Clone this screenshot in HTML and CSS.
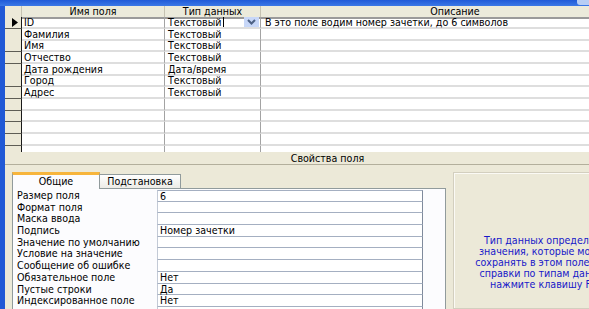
FILE: index.html
```html
<!DOCTYPE html>
<html lang="ru">
<head>
<meta charset="utf-8">
<title>Конструктор таблицы</title>
<link rel="stylesheet" href="styles.css">
</head>
<body>
<div class="titlebar"><span class="tb-btn"></span></div>
<div class="window">
  <div class="grid">
    <div class="row head">
      <div class="sel"></div>
      <div class="c c1">Имя поля</div>
      <div class="c c2">Тип данных</div>
      <div class="c c3">Описание</div>
    </div>
    <div class="row">
      <div class="sel"><svg class="arrow" width="6" height="9" viewBox="0 0 6 9"><path d="M0 0 L6 4.5 L0 9 Z" fill="#000"/></svg></div>
      <div class="c c1">ID</div>
      <div class="c c2 edit"><span>Текстовый<i class="caret"></i></span><span class="combo"><svg width="9" height="6" viewBox="0 0 9 6"><path d="M1 1 L4.5 4.5 L8 1" fill="none" stroke="#4d6185" stroke-width="2"/></svg></span></div>
      <div class="c c3">В это поле водим номер зачетки, до 6 символов</div>
    </div>
    <div class="row"><div class="sel"></div><div class="c c1">Фамилия</div><div class="c c2">Текстовый</div><div class="c c3"></div></div>
    <div class="row"><div class="sel"></div><div class="c c1">Имя</div><div class="c c2">Текстовый</div><div class="c c3"></div></div>
    <div class="row"><div class="sel"></div><div class="c c1">Отчество</div><div class="c c2">Текстовый</div><div class="c c3"></div></div>
    <div class="row"><div class="sel"></div><div class="c c1">Дата рождения</div><div class="c c2">Дата/время</div><div class="c c3"></div></div>
    <div class="row"><div class="sel"></div><div class="c c1">Город</div><div class="c c2">Текстовый</div><div class="c c3"></div></div>
    <div class="row"><div class="sel"></div><div class="c c1">Адрес</div><div class="c c2">Текстовый</div><div class="c c3"></div></div>
    <div class="row"><div class="sel"></div><div class="c c1"></div><div class="c c2"></div><div class="c c3"></div></div>
    <div class="row"><div class="sel"></div><div class="c c1"></div><div class="c c2"></div><div class="c c3"></div></div>
    <div class="row"><div class="sel"></div><div class="c c1"></div><div class="c c2"></div><div class="c c3"></div></div>
    <div class="row"><div class="sel"></div><div class="c c1"></div><div class="c c2"></div><div class="c c3"></div></div>
    <div class="row"><div class="sel"></div><div class="c c1"></div><div class="c c2"></div><div class="c c3"></div></div>
    <div class="row"><div class="sel"></div><div class="c c1"></div><div class="c c2"></div><div class="c c3"></div></div>
  </div>
  <div class="props-title">Свойства поля</div>
  <div class="lower">
    <div class="tabs">
      <div class="tabstrip">
        <div class="tab active">Общие</div>
        <div class="tab">Подстановка</div>
      </div>
      <div class="page">
        <div class="prop first"><div class="label">Размер поля</div><div class="val">6</div></div>
        <div class="prop"><div class="label">Формат поля</div><div class="val"></div></div>
        <div class="prop"><div class="label">Маска ввода</div><div class="val"></div></div>
        <div class="prop"><div class="label">Подпись</div><div class="val">Номер зачетки</div></div>
        <div class="prop"><div class="label">Значение по умолчанию</div><div class="val"></div></div>
        <div class="prop"><div class="label">Условие на значение</div><div class="val"></div></div>
        <div class="prop"><div class="label">Сообщение об ошибке</div><div class="val"></div></div>
        <div class="prop"><div class="label">Обязательное поле</div><div class="val">Нет</div></div>
        <div class="prop"><div class="label">Пустые строки</div><div class="val">Да</div></div>
        <div class="prop"><div class="label">Индексированное поле</div><div class="val">Нет</div></div>
        <div class="prop"><div class="label"></div><div class="val"></div></div>
      </div>
    </div>
    <div class="help">Тип данных определяет<br>значения, которые можно<br>сохранять в этом поле. Для<br>справки по типам данных<br>нажмите клавишу F1.</div>
  </div>
</div>
</body>
</html>
```
FILE: styles.css
```css
* { box-sizing: border-box; }
html, body {
  margin: 0;
  height: 309px;
  overflow: hidden;
}
body {
  width: 589px;
  background: #ECE9D8;
  font-family: "DejaVu Sans Condensed", "DejaVu Sans", sans-serif;
  font-stretch: condensed;
  font-size: 10.6px;
  color: #000;
}
.titlebar {
  position: relative;
  width: 650px;
  height: 6px;
  background: linear-gradient(#1f5ad8, #3a78e6);
}
.tb-btn {
  position: absolute;
  left: 577px;
  top: 0;
  width: 14px;
  height: 5px;
  background: #b7cdf4;
  border-radius: 0 0 0 3px;
}
.window {
  width: 650px;
  height: 303px;
  border-left: 5px solid #2159d6;
  display: flex;
  flex-direction: column;
}
.grid {
  flex: none;
  height: 146px;
  overflow: hidden;
  background: #fff;
  display: flex;
  flex-direction: column;
}
.row {
  flex: none;
  display: grid;
  grid-template-columns: 17px 143px 96px 1fr;
  height: 11.7px;
}
.row.head { height: 11px; }
.sel {
  background: #ECE9D8;
  border-right: 1px solid #1a1a1a;
  border-bottom: 1px solid #5e5d55;
  display: flex;
  align-items: center;
  justify-content: flex-end;
  padding-right: 3px;
}
.head .sel { border-bottom: 2px solid #9a9a9a; border-right: 1px solid #c5c2b2; }
.c {
  border-right: 1px solid #a3a3a3;
  border-bottom: 2px solid #dedede;
  padding-left: 2px;
  line-height: 10px;
  white-space: nowrap;
}
.c2 { padding-left: 3px; }
.c3 { padding-left: 4px; border-right: none; }
.head .c {
  background: #ebeadb;
  text-align: center;
  border-bottom: 2px solid #9a9a9a;
  border-right: 1px solid #c5c2b2;
  line-height: 11px;
  padding-left: 0;
}
.edit {
  display: flex;
  justify-content: space-between;
  padding-right: 1px;
}
.caret {
  display: inline-block;
  width: 1px;
  height: 10px;
  background: #000;
  vertical-align: top;
  margin-left: 2px;
}
.combo {
  width: 15px;
  height: 10px;
  background: #c7d7f8;
  display: flex;
  align-items: center;
  justify-content: center;
}
.props-title {
  flex: none;
  height: 13px;
  line-height: 12px;
  text-align: center;
  border-bottom: 1px solid #b3af9c;
  background: #ECE9D8;
}
.lower {
  flex: 1;
  display: flex;
  gap: 7px;
  padding: 7px 0 0 7px;
  min-height: 0;
}
.tabs {
  width: 434px;
  display: flex;
  flex-direction: column;
}
.tabstrip {
  height: 16px;
  display: flex;
  align-items: flex-end;
}
.tab {
  height: 14px;
  width: 81px;
  text-align: center;
  line-height: 13px;
  border: 1px solid #919b9c;
  border-left: none;
  border-bottom: none;
  background: linear-gradient(#ffffff, #ecebe6);
}
.tab.active {
  position: relative;
  z-index: 1;
  width: 88px;
  height: 17px;
  margin-bottom: -1px;
  border-left: 1px solid #919b9c;
  border-top: 3px solid #f7b53c;
  background: #fcfcfe;
  line-height: 12px;
}
.page {
  flex: 1;
  border: 1px solid #919b9c;
  background: #fcfcfe;
  padding-top: 1px;
}
.prop {
  display: grid;
  grid-template-columns: 144px 266px;
  height: 11.7px;
  line-height: 11px;
}
.label {
  padding-left: 4px;
  white-space: nowrap;
}
.val {
  background: #fff;
  border-left: 1px solid #c3cad6;
  border-right: 1px solid #7f8a9c;
  border-bottom: 1px solid #a4afc1;
  padding-left: 2px;
  white-space: nowrap;
  line-height: 10px;
}
.prop.first .val { border-top: 1px solid #a4afc1; }
.help {
  width: 184px;
  border: 1px solid #d3cfbf;
  box-shadow: inset 1px 1px 0 #fbfaf5;
  background: #ECE9D8;
  color: #1818c8;
  text-align: center;
  line-height: 11px;
  padding-top: 62px;
  white-space: nowrap;
}
```
